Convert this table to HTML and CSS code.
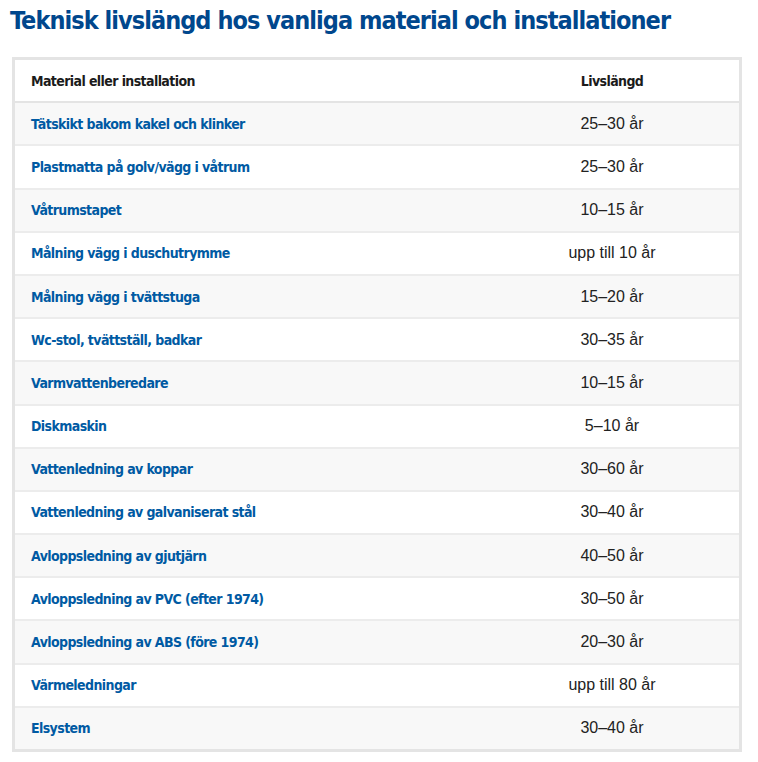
FILE: index.html
```html
<!DOCTYPE html>
<html lang="sv">
<head>
<meta charset="utf-8">
<title>Teknisk livslängd</title>
<link rel="stylesheet" href="styles.css">
</head>
<body>
<h1 class="title">Teknisk livslängd hos vanliga material och installationer</h1>
<div class="table-wrap">
<table class="life">
<thead>
<tr><th class="c1">Material eller installation</th><th class="c2">Livslängd</th></tr>
</thead>
<tbody>
<tr><td class="c1">Tätskikt bakom kakel och klinker</td><td class="c2">25–30 år</td></tr>
<tr><td class="c1">Plastmatta på golv/vägg i våtrum</td><td class="c2">25–30 år</td></tr>
<tr><td class="c1">Våtrumstapet</td><td class="c2">10–15 år</td></tr>
<tr><td class="c1">Målning vägg i duschutrymme</td><td class="c2">upp till 10 år</td></tr>
<tr><td class="c1">Målning vägg i tvättstuga</td><td class="c2">15–20 år</td></tr>
<tr><td class="c1">Wc-stol, tvättställ, badkar</td><td class="c2">30–35 år</td></tr>
<tr><td class="c1">Varmvattenberedare</td><td class="c2">10–15 år</td></tr>
<tr><td class="c1">Diskmaskin</td><td class="c2">5–10 år</td></tr>
<tr><td class="c1">Vattenledning av koppar</td><td class="c2">30–60 år</td></tr>
<tr><td class="c1">Vattenledning av galvaniserat stål</td><td class="c2">30–40 år</td></tr>
<tr><td class="c1">Avloppsledning av gjutjärn</td><td class="c2">40–50 år</td></tr>
<tr><td class="c1">Avloppsledning av PVC (efter 1974)</td><td class="c2">30–50 år</td></tr>
<tr><td class="c1">Avloppsledning av ABS (före 1974)</td><td class="c2">20–30 år</td></tr>
<tr><td class="c1">Värmeledningar</td><td class="c2">upp till 80 år</td></tr>
<tr><td class="c1">Elsystem</td><td class="c2">30–40 år</td></tr>
</tbody>
</table>
</div>
</body>
</html>
```
FILE: styles.css
```css
html, body {
  margin: 0;
  padding: 0;
  background: #ffffff;
}
body {
  padding: 5px 0 0 0;
}
.title {
  margin: 0 0 0 10px;
  font-family: "DejaVu Sans Condensed", "Liberation Sans", sans-serif;
  font-weight: 700;
  font-size: 25px;
  letter-spacing: -0.95px;
  line-height: 32px;
  white-space: nowrap;
  color: #00478d;
}
.table-wrap {
  margin: 20px 0 0 12px;
  width: 724px;
  border: 3px solid #e4e4e4;
}
.life {
  width: 100%;
  border-collapse: collapse;
  table-layout: fixed;
}
.life th, .life td {
  height: 41.2px;
  padding: 0 16px;
  vertical-align: middle;
  border-bottom: 2px solid #ececec;
}
.life tbody tr:last-child td {
  border-bottom: none;
}
.life th.c1 { width: 438px; }
.life .c1 {
  text-align: left;
  font-family: "DejaVu Sans Condensed", sans-serif;
  font-weight: 700;
  font-size: 14px;
  letter-spacing: -0.6px;
}
.life th {
  color: #1b1b1b;
  background: #ffffff;
}
.life thead th {
  border-bottom: 2px solid #e4e4e4;
}
.life th.c2 {
  text-align: center;
  font-family: "DejaVu Sans Condensed", sans-serif;
  font-weight: 700;
  font-size: 14px;
  letter-spacing: -0.6px;
}
.life td.c1 {
  color: #005aa3;
}
.life td.c2 {
  text-align: center;
  font-family: "Liberation Sans", Arial, sans-serif;
  font-size: 16px;
  color: #222222;
}
.life tbody tr:nth-child(odd) td {
  background: #f8f8f8;
}
.life tbody tr:nth-child(even) td {
  background: #ffffff;
}
```
